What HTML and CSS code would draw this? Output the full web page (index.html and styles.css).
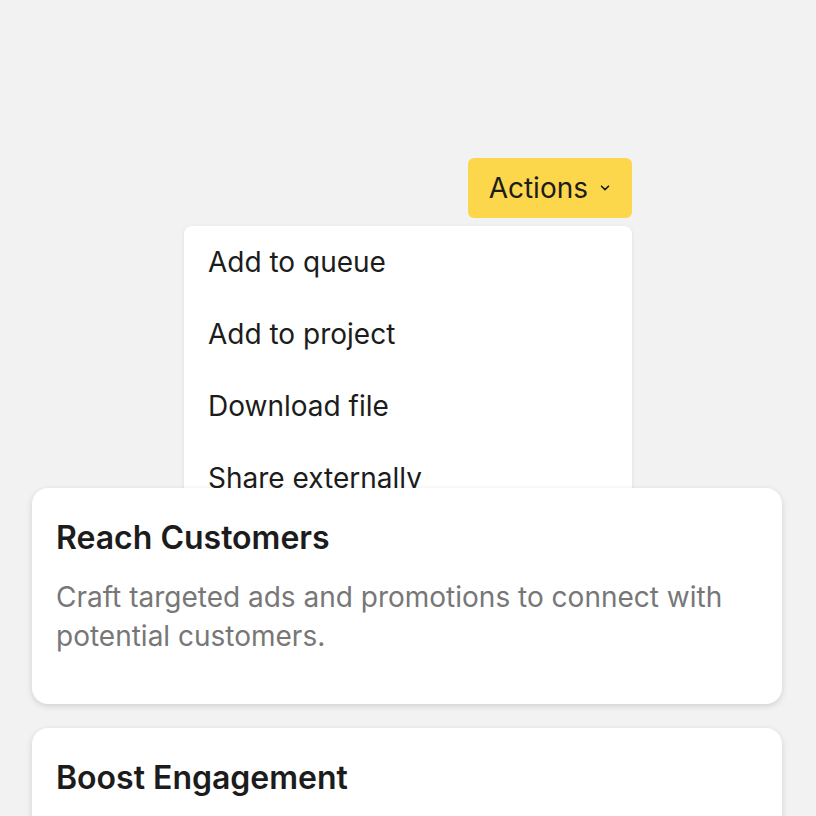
FILE: index.html
```html
<!DOCTYPE html>
<html lang="en">
<head>
<meta charset="UTF-8">
<meta name="viewport" content="width=device-width, initial-scale=1.0">
<title>Actions</title>
<link rel="stylesheet" href="styles.css">
</head>
<body>

<div class="toolbar">
  <div class="dropdown">
    <button class="actions-button">Actions
      <svg class="chevron" width="10" height="6" viewBox="0 0 10 6"><polyline points="1.5,1.2 5,4.6 8.5,1.2" fill="none" stroke="#1a1a1a" stroke-width="1.6" stroke-linecap="round" stroke-linejoin="round"/></svg>
    </button>
    <ul class="menu">
      <li>Add to queue</li>
      <li>Add to project</li>
      <li>Download file</li>
      <li>Share externally</li>
    </ul>
  </div>
</div>

<div class="cards">
  <div class="card">
    <h2>Reach Customers</h2>
    <p>Craft targeted ads and promotions to connect with potential customers.</p>
  </div>
  <div class="card">
    <h2>Boost Engagement</h2>
    <p>Keep your audience coming back with content that sparks conversation.</p>
  </div>
</div>

</body>
</html>
```

FILE: styles.css
```css
body {
  font-family: Inter, "Noto Sans", sans-serif;
  margin: 0;
  padding: 0;
  background-color: #f2f2f2;
  color: #1c1c1c;
  overflow: hidden;
}
.toolbar {
  padding: 158px 0 0 184px;
  height: 488px;
  box-sizing: border-box;
}
.dropdown {
  position: relative;
  width: 448px;
  display: flex;
  justify-content: flex-end;
}
.actions-button {
  display: flex;
  align-items: center;
  gap: 12px;
  height: 60px;
  padding: 0 22px 0 21px;
  background-color: #fcd74c;
  color: #1c1c1c;
  border: none;
  border-radius: 6px;
  font-family: inherit;
  font-size: 28px;
  cursor: pointer;
}
.menu {
  position: absolute;
  top: 68px;
  left: 0;
  right: 0;
  z-index: 1;
  max-height: 272px;
  overflow: hidden;
  list-style: none;
  margin: 0;
  padding: 0;
  background-color: #fff;
  border-radius: 8px;
  box-shadow: 0 1px 4px rgba(0, 0, 0, 0.08);
}
.menu li {
  padding: 20px 24px;
  line-height: 32px;
  font-size: 28px;
}
.cards {
  display: flex;
  flex-direction: column;
  gap: 24px;
  margin: 0 34px 0 32px;
}
.card {
  position: relative;
  z-index: 2;
  background-color: #fff;
  border-radius: 16px;
  padding: 28px 24px 48px;
  box-shadow: 0 2px 6px rgba(0, 0, 0, 0.14);
}
.card h2 {
  margin: 0 0 18px;
  font-size: 32px;
  font-weight: 600;
  line-height: 44px;
}
.card p {
  margin: 0;
  font-size: 28px;
  line-height: 39px;
  color: #777;
}
```
